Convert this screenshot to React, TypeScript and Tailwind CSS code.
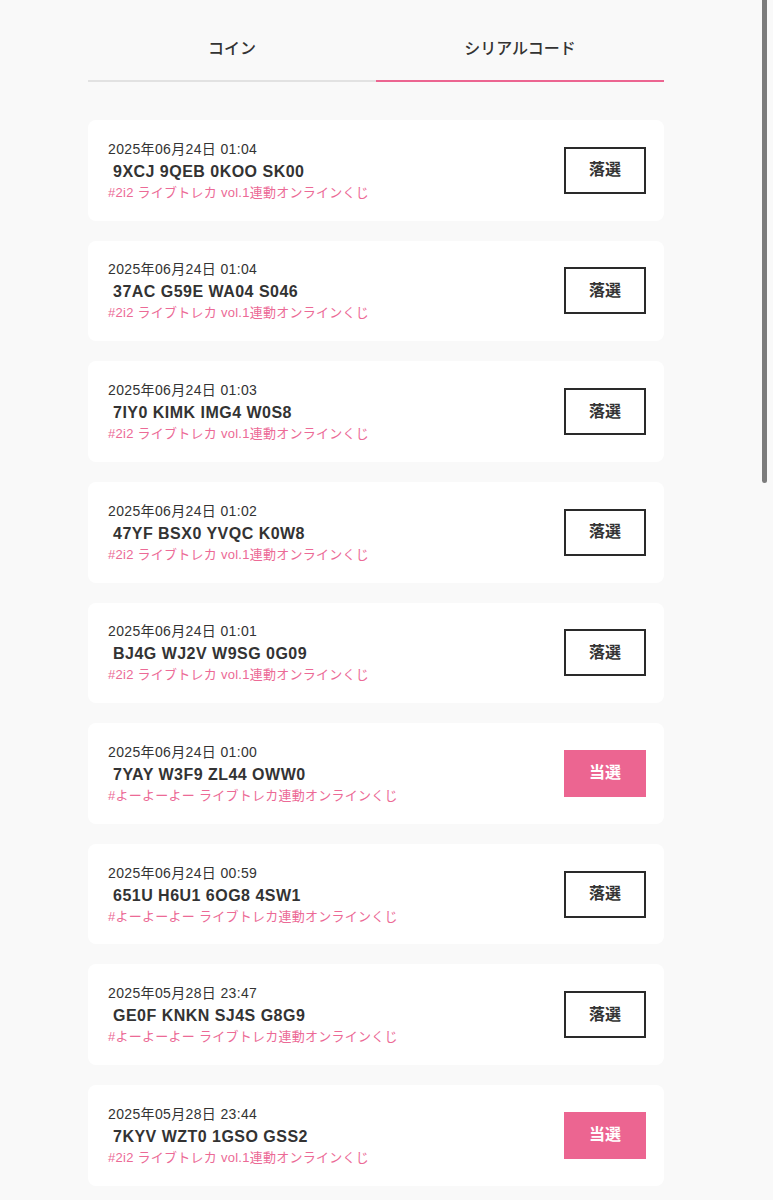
import React from "react";

type Item = { date: string; code: string; label: string; win: boolean };

const items: Item[] = [
  { date: "2025年06月24日 01:04", code: "9XCJ 9QEB 0KOO SK00", label: "#2i2 ライブトレカ vol.1連動オンラインくじ", win: false },
  { date: "2025年06月24日 01:04", code: "37AC G59E WA04 S046", label: "#2i2 ライブトレカ vol.1連動オンラインくじ", win: false },
  { date: "2025年06月24日 01:03", code: "7IY0 KIMK IMG4 W0S8", label: "#2i2 ライブトレカ vol.1連動オンラインくじ", win: false },
  { date: "2025年06月24日 01:02", code: "47YF BSX0 YVQC K0W8", label: "#2i2 ライブトレカ vol.1連動オンラインくじ", win: false },
  { date: "2025年06月24日 01:01", code: "BJ4G WJ2V W9SG 0G09", label: "#2i2 ライブトレカ vol.1連動オンラインくじ", win: false },
  { date: "2025年06月24日 01:00", code: "7YAY W3F9 ZL44 OWW0", label: "#よーよーよー ライブトレカ連動オンラインくじ", win: true },
  { date: "2025年06月24日 00:59", code: "651U H6U1 6OG8 4SW1", label: "#よーよーよー ライブトレカ連動オンラインくじ", win: false },
  { date: "2025年05月28日 23:47", code: "GE0F KNKN SJ4S G8G9", label: "#よーよーよー ライブトレカ連動オンラインくじ", win: false },
  { date: "2025年05月28日 23:44", code: "7KYV WZT0 1GSO GSS2", label: "#2i2 ライブトレカ vol.1連動オンラインくじ", win: true },
];

export default function App() {
  return (
    <div
      className="relative min-h-[1200px] w-full bg-[#f9f9f9] text-[#333]"
      style={{ fontFamily: '"Liberation Sans", "Noto Sans CJK JP", sans-serif' }}
    >
      <div className="w-[752px]">
        <div className="mx-auto w-[576px] pb-10">
          <div className="flex">
            <div className="flex-1 border-b-2 border-[#e2e2e2] pt-[37px] pb-[19px] text-center text-[16px] leading-[24px] font-medium text-[#333]">
              コイン
            </div>
            <div className="flex-1 border-b-2 border-[#ec6591] pt-[37px] pb-[19px] text-center text-[16px] leading-[24px] font-medium text-[#333]">
              シリアルコード
            </div>
          </div>
          <div className="mt-[38px] flex flex-col gap-[20px]">
            {items.map((it, i) => (
              <div
                key={i}
                className="flex h-[100.625px] items-center justify-between rounded-[8px] bg-white pl-5 pr-[18px]"
              >
                <div className="flex flex-col">
                  <div className="text-[14px] leading-[20px] tracking-[0.025em] text-[#333]">{it.date}</div>
                  <div className="mt-[1px] pl-[5px] text-[16px] leading-[24px] font-bold tracking-[0.03em] text-[#333]">
                    {it.code}
                  </div>
                  <div className="text-[13px] leading-[18px] tracking-[0.02em] text-[#ec6a96]">{it.label}</div>
                </div>
                {it.win ? (
                  <div className="flex h-[47px] w-[82px] items-center justify-center bg-[#ec6591] text-[16px] font-bold text-white">
                    当選
                  </div>
                ) : (
                  <div className="flex h-[47px] w-[82px] items-center justify-center border-2 border-[#2a2a2a] bg-white text-[16px] font-bold text-[#333]">
                    落選
                  </div>
                )}
              </div>
            ))}
          </div>
        </div>
      </div>
      <div className="absolute top-0 right-[6px] h-[483px] w-[5px] rounded-b-full bg-[#7c7c7c]" />
    </div>
  );
}
